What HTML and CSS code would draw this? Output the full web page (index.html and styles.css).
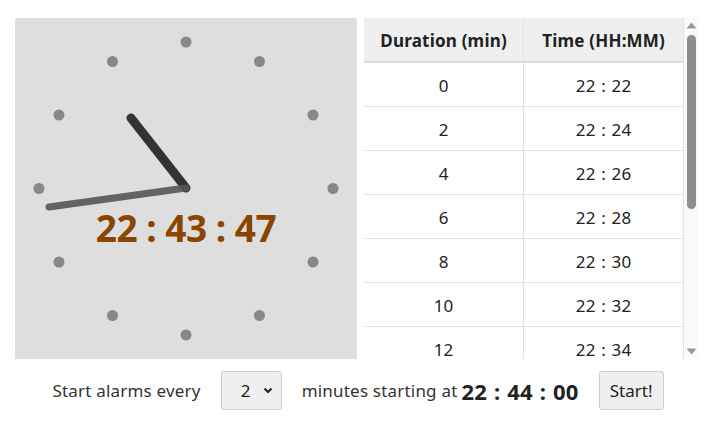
FILE: index.html
```html
<!DOCTYPE html>
<html>
<head>
<meta charset="utf-8">
<link rel="stylesheet" href="styles.css">
</head>
<body>
<div class="app">
  <div class="top">
    <div class="clock">
      <svg class="face" width="342" height="341" viewBox="0 0 342 341">
        <g fill="#888">
          <circle cx="171" cy="24" r="5.5"/>
          <circle cx="244.5" cy="43.5" r="5.5"/>
          <circle cx="298" cy="97" r="5.5"/>
          <circle cx="318" cy="170.5" r="5.5"/>
          <circle cx="298" cy="244" r="5.5"/>
          <circle cx="244.5" cy="297.5" r="5.5"/>
          <circle cx="171" cy="317" r="5.5"/>
          <circle cx="97.5" cy="297.5" r="5.5"/>
          <circle cx="44" cy="244" r="5.5"/>
          <circle cx="24" cy="170.5" r="5.5"/>
          <circle cx="44" cy="97" r="5.5"/>
          <circle cx="97.5" cy="43.5" r="5.5"/>
        </g>
        <line x1="171" y1="170" x2="116" y2="100" stroke="#333" stroke-width="9" stroke-linecap="round"/>
        <line x1="171" y1="170" x2="34" y2="189" stroke="#555" stroke-opacity="0.9" stroke-width="7" stroke-linecap="round"/>
      </svg>
      <div class="digital">22 : 43 : 47</div>
    </div>
    <div class="tableview">
      <div class="tablewrap">
        <table class="schedule">
          <thead>
            <tr><th>Duration (min)</th><th>Time (HH:MM)</th></tr>
          </thead>
          <tbody>
            <tr><td>0</td><td>22 : 22</td></tr>
            <tr><td>2</td><td>22 : 24</td></tr>
            <tr><td>4</td><td>22 : 26</td></tr>
            <tr><td>6</td><td>22 : 28</td></tr>
            <tr><td>8</td><td>22 : 30</td></tr>
            <tr><td>10</td><td>22 : 32</td></tr>
            <tr><td>12</td><td>22 : 34</td></tr>
          </tbody>
        </table>
      </div>
      <div class="scrollbar">
        <svg class="arrow" width="15" height="16" viewBox="0 0 15 16"><path d="M2.5 10.5 L7.5 4.5 L12.5 10.5 Z" fill="#999"/></svg>
        <div class="track"><div class="thumb"></div></div>
        <svg class="arrow" width="15" height="16" viewBox="0 0 15 16"><path d="M2.5 5.5 L12.5 5.5 L7.5 11.5 Z" fill="#999"/></svg>
      </div>
    </div>
  </div>
  <div class="controls">
    <span class="label">Start alarms every</span>
    <div class="select"><span>2</span><svg width="10" height="7" viewBox="0 0 10 7"><path d="M1.5 1.5 L5 5 L8.5 1.5" fill="none" stroke="#222" stroke-width="2"/></svg></div>
    <span class="label">minutes starting at</span>
    <span class="start-time">22 : 44 : 00</span>
    <button class="btn">Start!</button>
  </div>
</div>
</body>
</html>
```
FILE: styles.css
```css
html, body {
  margin: 0;
  padding: 0;
  background: #fff;
  font-family: "Noto Sans", "Open Sans", sans-serif;
  color: #222;
}
.app {
  padding: 18px 0 0 15px;
  width: 695px;
}
.top {
  display: flex;
  gap: 7px;
  height: 341px;
}
.clock {
  position: relative;
  width: 342px;
  height: 341px;
  background: #dedede;
  flex: none;
}
.face {
  display: block;
}
.digital {
  position: absolute;
  left: 0;
  right: 0;
  top: 185px;
  text-align: center;
  font-size: 37px;
  font-weight: bold;
  color: #8a4500;
  line-height: 50px;
  letter-spacing: -0.5px;
}
.tableview {
  display: flex;
  height: 341px;
  flex: none;
}
.tablewrap {
  width: 320px;
  height: 341px;
  overflow: hidden;
}
.scrollbar {
  width: 15px;
  height: 341px;
  background: #fafafa;
  display: flex;
  flex-direction: column;
}
.arrow {
  display: block;
  flex: none;
}
.track {
  flex: 1;
  padding: 1px 3px 0 2.5px;
}
.thumb {
  height: 174px;
  background: #8d8d8d;
  border-radius: 5px;
}
.schedule {
  width: 320px;
  border-collapse: collapse;
  font-size: 17px;
  letter-spacing: 0.2px;
}
.schedule th, .schedule td {
  height: 42px;
  padding: 1px 0 0;
  text-align: center;
  border: 1px solid #e2e2e2;
  width: 50%;
}
.schedule tr > :first-child { border-left: none; }
.schedule th {
  background: #efefef;
  font-weight: bold;
  color: #222;
  border-top: none;
  border-bottom: 2px solid #dcdcdc;
}
.schedule td {
  color: #222;
  word-spacing: 1px;
}
.controls {
  display: flex;
  align-items: center;
  justify-content: center;
  margin-top: 12px;
  height: 39px;
  padding-right: 20px;
  color: #333;
  font-size: 17px;
  letter-spacing: 0.2px;
}
.label {
  margin: 0 11px;
}
.select {
  border: 1px solid #cdcdcd;
  border-radius: 3px;
  background: #efefef;
  display: flex;
  align-items: center;
  justify-content: space-between;
  padding: 0 8px 0 19px;
  box-sizing: border-box;
  width: 61px;
  height: 39px;
  margin: 0 9px;
  color: #222;
}
.start-time {
  font-size: 22px;
  font-weight: bold;
  color: #222;
  margin: 0 20px 0 -7px;
  word-spacing: 1px;
}
.btn {
  width: 65px;
  height: 39px;
  border: 1px solid #cdcdcd;
  border-radius: 3px;
  background: #efefef;
  font-family: inherit;
  font-size: 17px;
  color: #222;
  padding: 0;
}
```
